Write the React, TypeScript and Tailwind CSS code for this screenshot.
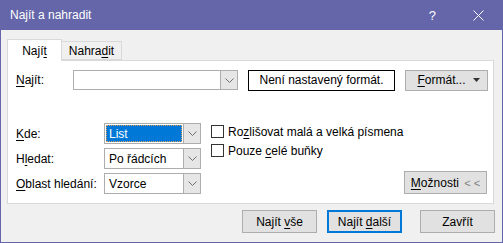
import React from "react";

const Chevron = () => (
  <svg width="9" height="5" viewBox="0 0 9 5">
    <polyline points="0.5,0.5 4.5,4.5 8.5,0.5" fill="none" stroke="#707070" strokeWidth="1" />
  </svg>
);

const U = ({ children }: { children: React.ReactNode }) => (
  <span className="underline decoration-1 underline-offset-[2px]">{children}</span>
);

const Select = ({ value, selected }: { value: string; selected?: boolean }) => (
  <div className="flex h-[21px] w-[97px] border border-[#adadad] bg-white">
    <div className="flex flex-1 items-center p-[1px]">
      {selected ? (
        <div className="flex h-full w-full items-center border border-dotted border-[#e0a060] bg-[#0078d7] pl-[2px] text-white">
          <span>{value}</span>
        </div>
      ) : (
        <span className="pl-[3px]">{value}</span>
      )}
    </div>
    <div className="flex w-[17px] items-center justify-center border-l border-[#adadad] bg-[#e6e6e6]">
      <Chevron />
    </div>
  </div>
);

const Checkbox = ({ children }: { children: React.ReactNode }) => (
  <div className="flex items-center gap-[4px] whitespace-nowrap">
    <div className="h-[13px] w-[13px] shrink-0 border border-[#333] bg-white" />
    <span>{children}</span>
  </div>
);

const Button = ({ children, def, w = "w-[75px]" }: { children: React.ReactNode; def?: boolean; w?: string }) => (
  <div
    className={
      "flex h-[23px] items-center justify-center whitespace-nowrap bg-[#e1e1e1] " +
      w +
      (def ? " border-2 border-[#0078d7]" : " border border-[#adadad]")
    }
  >
    <span>{children}</span>
  </div>
);

export default function App() {
  return (
    <div className="flex h-[243px] w-[503px] flex-col border-x border-b border-[#6466a9] bg-[#f0f0f0] font-['Liberation_Sans',Arial,sans-serif] text-[12px] leading-none text-black">
      {/* Title bar */}
      <div className="flex h-[30px] shrink-0 items-center bg-[#6466a9] pl-[9px] text-white">
        <span className="flex-1">Najít a nahradit</span>
        <span className="mr-[37px] text-[13px]">?</span>
        <svg width="11" height="11" viewBox="0 0 11 11" className="mr-[18px]">
          <path d="M0.5 0.5 L10.5 10.5 M10.5 0.5 L0.5 10.5" stroke="white" strokeWidth="1" />
        </svg>
      </div>

      <div className="flex flex-1 flex-col px-[6px] pt-[8px]">
        {/* Tabs */}
        <div className="flex h-[22px] items-end">
          <div className="relative z-10 -mb-px flex h-[22px] w-[55px] items-center justify-center border border-b-0 border-[#d9d9d9] bg-white">
            <span>
              Nají<U>t</U>
            </span>
          </div>
          <div className="flex h-[19px] w-[60px] items-center justify-center border border-l-0 border-[#d9d9d9] bg-[#f0f0f0]">
            <span>
              Nahra<U>d</U>it
            </span>
          </div>
        </div>

        {/* Panel */}
        <div className="flex h-[144px] w-[487px] flex-col border border-[#d9d9d9] bg-white pl-[8px] pt-[9px]">
          <div className="flex h-[20px] items-center">
            <span className="w-[57px]">
              <U>N</U>ajít:
            </span>
            <div className="flex h-[20px] w-[165px] border border-[#adadad] bg-white">
              <div className="flex-1" />
              <div className="flex w-[17px] items-center justify-center border-l border-[#adadad] bg-[#e6e6e6]">
                <Chevron />
              </div>
            </div>
            <div className="ml-[10px] flex h-[21px] w-[147px] items-center justify-center whitespace-nowrap border border-black bg-white">
              <span>Není nastavený formát.</span>
            </div>
            <div className="ml-[10px] flex h-[21px] w-[83px] items-center border border-[#adadad] bg-[#e1e1e1]">
              <span className="flex-1 pl-[4px] text-center">
                <U>F</U>ormát...
              </span>
              <svg width="7" height="4" viewBox="0 0 7 4" className="mr-[7px]">
                <polygon points="0,0 7,0 3.5,4" fill="#333" />
              </svg>
            </div>
          </div>

          <div className="mt-[33px] flex">
            <div className="flex flex-col gap-[4px]">
              <div className="flex items-center">
                <span className="w-[88px]">
                  <U>K</U>de:
                </span>
                <Select value="List" selected />
              </div>
              <div className="flex items-center">
                <span className="w-[88px]">
                  H<U>l</U>edat:
                </span>
                <Select value="Po řádcích" />
              </div>
              <div className="flex items-center">
                <span className="w-[88px] whitespace-nowrap">
                  <U>O</U>blast hledání:
                </span>
                <Select value="Vzorce" />
              </div>
            </div>
            <div className="ml-[10px] flex flex-col gap-[6px] pt-[2px]">
              <Checkbox>
                Ro<U>z</U>lišovat malá a velká písmena
              </Checkbox>
              <Checkbox>
                Pouze <U>c</U>elé buňky
              </Checkbox>
            </div>
            <div className="flex flex-1 items-end justify-end pr-[6px]">
              <Button w="w-[83px]">
                <U>M</U>ožnosti <span className="ml-[2px] text-[11px] text-[#808080]">&lt; &lt;</span>
              </Button>
            </div>
          </div>
        </div>

        {/* Bottom buttons */}
        <div className="mt-[6px] flex justify-end pr-[1px]">
          <Button>
            Najít <U>v</U>še
          </Button>
          <div className="ml-[10px]">
            <Button def>
              Najít <U>d</U>alší
            </Button>
          </div>
          <div className="ml-[18px]">
            <Button>Zavřít</Button>
          </div>
        </div>
      </div>
    </div>
  );
}
